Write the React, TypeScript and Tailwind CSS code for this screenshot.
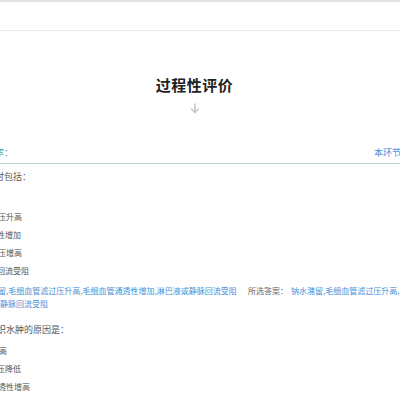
import React from "react";

const font = { fontFamily: '"Noto Sans CJK SC", "Noto Sans", sans-serif' };

export default function App() {
  return (
    <div
      className="w-[400px] h-[400px] overflow-hidden bg-white relative"
      style={font}
    >
      <div className="h-[31px] border-t-[2px] border-t-[#e2e2e2] border-b border-b-[#ececec]" />
      <div className="flex flex-col items-center pt-[43px] pr-[11px]">
        <div className="text-[15px] leading-[22px] font-bold text-[#222] tracking-[0.5px]">
          过程性评价
        </div>
        <svg
          width="10"
          height="11"
          viewBox="0 0 10 11"
          className="mt-[7px]"
          fill="none"
          stroke="#c8c8c8"
          strokeWidth="1.6"
          strokeLinecap="round"
        >
          <path d="M5 1v8.5M1.5 6l3.5 3.5L8.5 6" />
        </svg>
      </div>
      <div className="mt-[31px] flex justify-between items-center h-[19px] border-b border-b-[#b9d4d1] text-[9px] leading-[12px] pb-[3px]">
        <span className="text-[#3a9d8f] ml-[-5px]">率：</span>
        <span className="text-[#4a8fd8] mr-[-10px]">本环节评</span>
      </div>
      <div className="text-[8px] text-[#555] leading-[12px]">
        <div className="mt-[7px] ml-[-5px] text-[9px] text-[#555]">时包括：</div>
        <div className="mt-[28px] flex flex-col gap-[6px]">
          <div className="ml-[-2px]">压升高</div>
          <div className="ml-[-3px]">性增加</div>
          <div className="ml-[-2px]">压增高</div>
          <div className="ml-[-3px]">回流受阻</div>
        </div>
        <div className="mt-[7px] flex">
          <div className="w-[248px] shrink-0 text-[#4a8fd8] leading-[13px]">
            <div className="ml-[-2px] whitespace-nowrap">
              留,毛细血管滤过压升高,毛细血管通透性增加,淋巴液或静脉回流受阻
            </div>
            <div>静脉回流受阻</div>
          </div>
          <div className="whitespace-nowrap leading-[13px]">
            <span className="text-[#666]">所选答案：</span>
            <span className="text-[#4a8fd8] ml-[3px]">
              钠水潴留,毛细血管滤过压升高,毛细血管通透性增加
            </span>
          </div>
        </div>
        <div className="mt-[14px] ml-[-3px] text-[9px] text-[#555]">织水肿的原因是：</div>
        <div className="mt-[9px] flex flex-col gap-[6px]">
          <div className="ml-[-1px]">高</div>
          <div className="ml-[-3px]">压降低</div>
          <div className="ml-[-2px]">透性增高</div>
        </div>
      </div>
    </div>
  );
}
